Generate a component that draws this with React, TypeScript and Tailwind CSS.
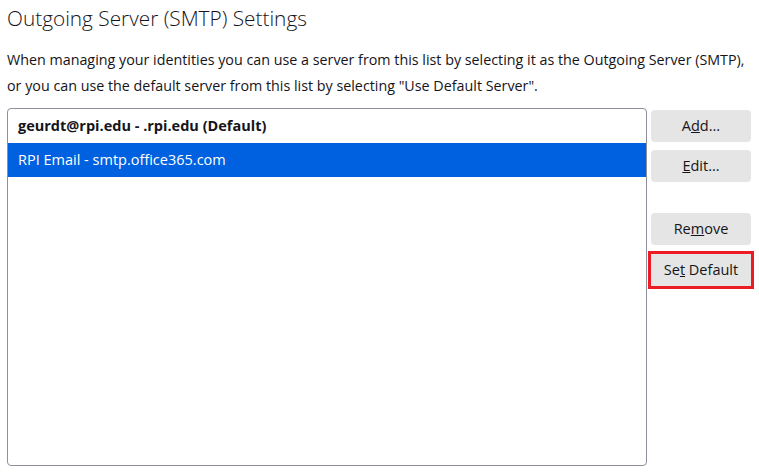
import React from "react";

const servers = [
  { label: "geurdt@rpi.edu - .rpi.edu (Default)", isDefault: true },
  { label: "RPI Email - smtp.office365.com", isDefault: false },
];

const Btn = ({ children, marked = false, className = "" }: { children: React.ReactNode; marked?: boolean; className?: string }) => (
  <button
    className={`h-8 w-[100px] bg-[#e5e5e5] text-[14.5px] text-[#15141a] ${
      marked ? "rounded-none outline-[3px] outline-solid outline-[#ed1c24]" : "rounded-[4px]"
    } ${className}`}
  >
    {children}
  </button>
);

export default function App() {
  const [selected, setSelected] = React.useState(1);

  return (
    <div className="w-[759px] h-[476px] bg-white text-[#15141a] pl-[7px] pt-[2px] font-['Open_Sans',sans-serif] overflow-hidden">
      <h1 className="text-[20.8px] font-light leading-[32px]">Outgoing Server (SMTP) Settings</h1>
      <p className="mt-[13px] text-[14.3px] leading-[26px]">
        When managing your identities you can use a server from this list by selecting it as the Outgoing Server (SMTP),
        <br />
        or you can use the default server from this list by selecting "Use Default Server".
      </p>

      <div className="mt-[9px] flex">
        <div className="w-[640px] h-[358px] border border-[#8f8f9d] rounded-[4px] overflow-hidden">
          {servers.map((s, i) => (
            <div
              key={s.label}
              onClick={() => setSelected(i)}
              className={`h-[34px] flex items-center px-[10px] text-[14.5px] ${
                s.isDefault ? "font-bold" : ""
              } ${i === selected ? "bg-[#0061e0] text-white" : ""}`}
            >
              {s.label}
            </div>
          ))}
        </div>

        <div className="ml-[4px] pt-[2px] flex flex-col">
          <Btn>
            A<u>d</u>d...
          </Btn>
          <Btn className="mt-[8px]">
            <u>E</u>dit...
          </Btn>
          <Btn className="mt-[31px]">
            Re<u>m</u>ove
          </Btn>
          <Btn marked className="mt-[9px]">
            Se<u>t</u> Default
          </Btn>
        </div>
      </div>
    </div>
  );
}
